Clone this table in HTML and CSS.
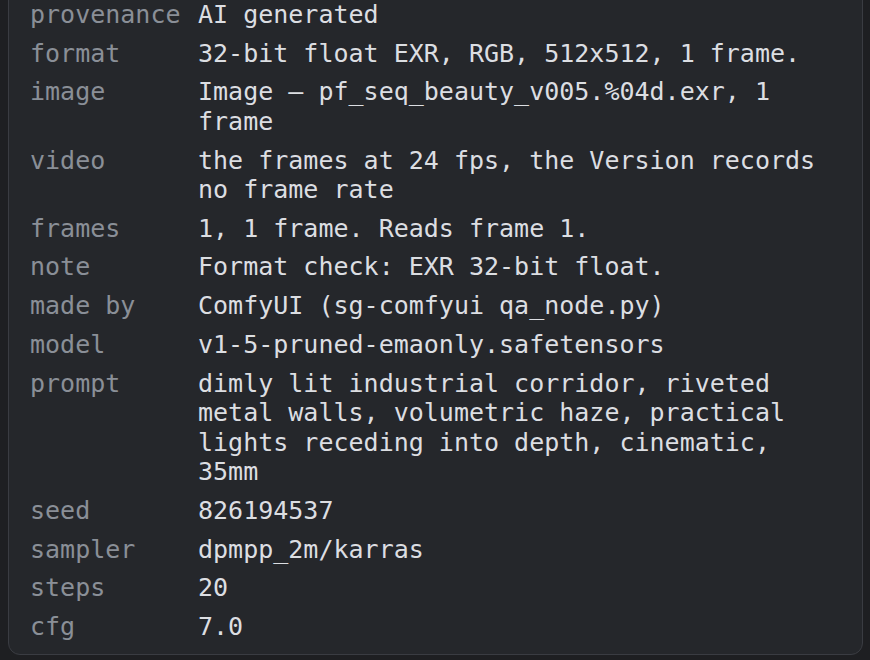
FILE: index.html
```html
<!DOCTYPE html>
<html lang="en">
<head>
<meta charset="utf-8">
<title>Metadata</title>
<link rel="stylesheet" href="styles.css">
</head>
<body>
<div class="panel">
  <dl class="meta">
    <dt>provenance</dt><dd>AI generated</dd>
    <dt>format</dt><dd>32-bit float EXR, RGB, 512x512, 1 frame.</dd>
    <dt>image</dt><dd>Image — pf_seq_beauty_v005.%04d.exr, 1 frame</dd>
    <dt>video</dt><dd>the frames at 24 fps, the Version records no frame rate</dd>
    <dt>frames</dt><dd>1, 1 frame. Reads frame 1.</dd>
    <dt>note</dt><dd>Format check: EXR 32-bit float.</dd>
    <dt>made by</dt><dd>ComfyUI (sg-comfyui qa_node.py)</dd>
    <dt>model</dt><dd>v1-5-pruned-emaonly.safetensors</dd>
    <dt>prompt</dt><dd>dimly lit industrial corridor, riveted metal walls, volumetric haze, practical lights receding into depth, cinematic, 35mm</dd>
    <dt>seed</dt><dd>826194537</dd>
    <dt>sampler</dt><dd>dpmpp_2m/karras</dd>
    <dt>steps</dt><dd>20</dd>
    <dt>cfg</dt><dd>7.0</dd>
  </dl>
</div>
</body>
</html>
```
FILE: styles.css
```css
html, body {
  margin: 0;
  padding: 0;
  background: #1e1f22;
}

body {
  height: 660px;
  overflow: hidden;
  display: flex;
  flex-direction: column;
}

.panel {
  flex: 1;
  margin: -20px 7px 5px 8px;
  padding: 18.7px 21px 0 21px;
  background: #25272b;
  border: 1px solid #3a3c42;
  border-radius: 12px;
  font-family: "DejaVu Sans Mono", "Liberation Mono", monospace;
  font-size: 25px;
  line-height: 29.33px;
}

.meta {
  margin: 0;
  display: grid;
  grid-template-columns: max-content 1fr;
  column-gap: 17.5px;
  row-gap: 9.5px;
}

.meta dt {
  color: #8a8f97;
  white-space: nowrap;
}

.meta dd {
  margin: 0;
  color: #dcdee2;
}
```
